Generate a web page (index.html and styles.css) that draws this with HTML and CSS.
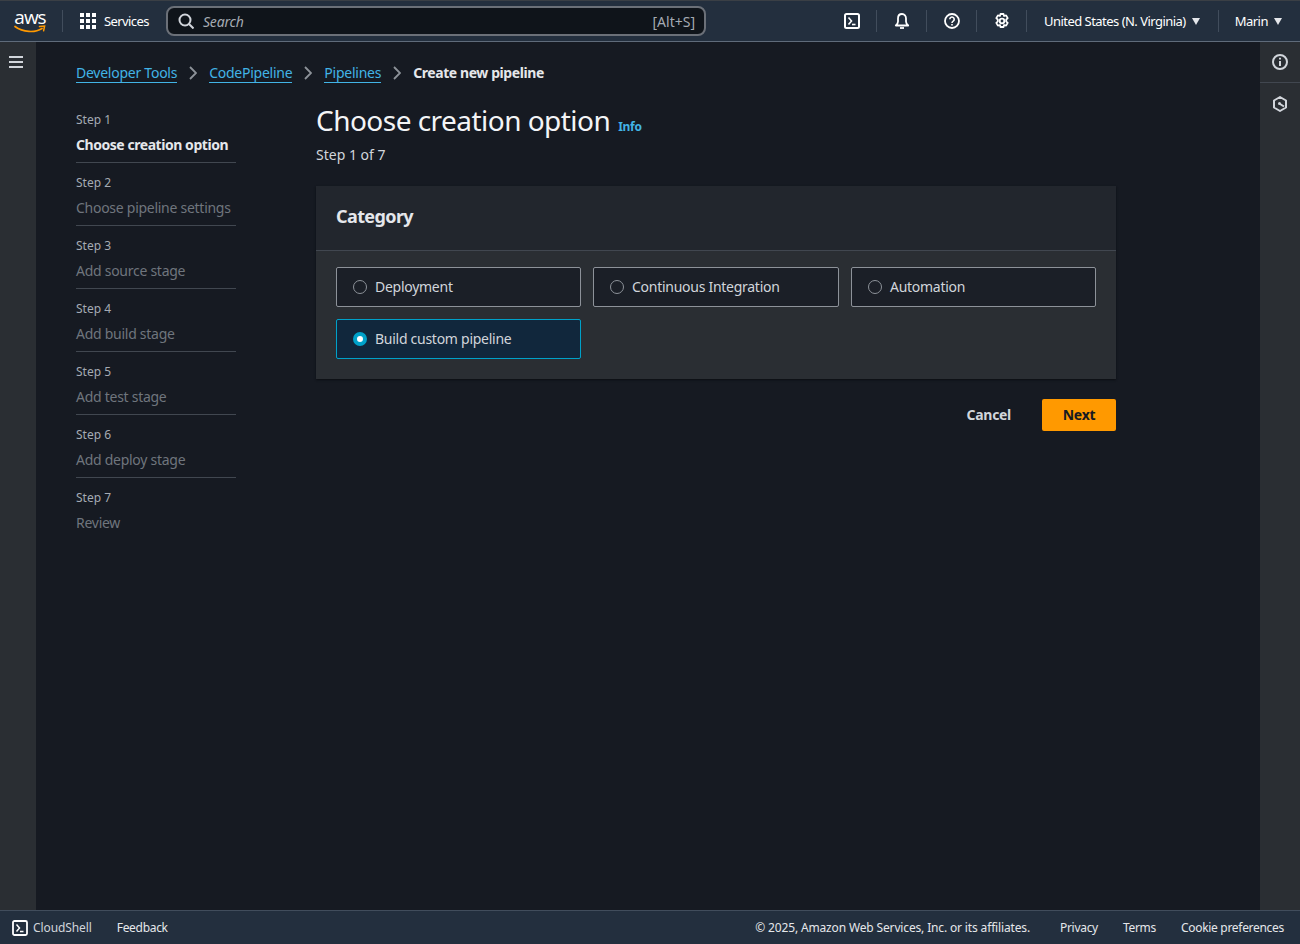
FILE: index.html
```html
<!DOCTYPE html>
<html lang="en">

<head>
    <meta charset="UTF-8">
    <title>Create new pipeline</title>
    <link rel="stylesheet" href="styles.css">
</head>

<body>
    <header class="topbar">
        <div class="logo">
            <span class="logo-text">aws</span>
            <svg class="logo-smile" width="32" height="9" viewBox="0 0 32 9">
                <path d="M1 1.5C9 7.5 21 8 28 3.5" fill="none" stroke="#f90" stroke-width="1.7" stroke-linecap="round" />
                <path d="M25.5 1.6L30.6 1L29.6 5.8" fill="none" stroke="#f90" stroke-width="1.5" stroke-linecap="round" />
            </svg>
        </div>
        <span class="bar-line logo-line"></span>
        <svg class="grid-icon" width="16" height="16" viewBox="0 0 16 16" fill="#fff">
            <rect x="0" y="0" width="4" height="4" />
            <rect x="6" y="0" width="4" height="4" />
            <rect x="12" y="0" width="4" height="4" />
            <rect x="0" y="6" width="4" height="4" />
            <rect x="6" y="6" width="4" height="4" />
            <rect x="12" y="6" width="4" height="4" />
            <rect x="0" y="12" width="4" height="4" />
            <rect x="6" y="12" width="4" height="4" />
            <rect x="12" y="12" width="4" height="4" />
        </svg>
        <span class="services">Services</span>
        <div class="search">
            <svg width="16" height="16" viewBox="0 0 16 16" fill="none" stroke="#d1d5db" stroke-width="2">
                <circle cx="7" cy="7" r="5.5" />
                <path d="M11 11l4.5 4.5" />
            </svg>
            <span class="search-text">Search</span>
            <span class="search-key">[Alt+S]</span>
        </div>
        <div class="tools">
            <span class="tool">
                <svg width="16" height="16" viewBox="0 0 16 16" fill="none" stroke="#fff" stroke-width="2">
                    <rect x="1" y="1" width="14" height="14" rx="1.5" />
                    <path d="M4.5 4.5L7.5 8L4.5 11.5" stroke-width="1.6" />
                    <path d="M8 11.5h3.5" stroke-width="1.6" />
                </svg>
            </span>
            <span class="bar-line"></span>
            <span class="tool">
                <svg width="16" height="16" viewBox="0 0 16 16" fill="none" stroke="#fff" stroke-width="1.8">
                    <path d="M8 1C5.500 1 4 3 4 5.500V8.500C4 10.300 3 11.500 1.800 12.500H14.200C13 11.500 12 10.300 12 8.500V5.500C12 3 10.500 1 8 1z" stroke-linejoin="round" />
                    <path d="M6 15h4" stroke-width="1.800" />
                </svg>
            </span>
            <span class="bar-line"></span>
            <span class="tool">
                <svg width="16" height="16" viewBox="0 0 16 16" fill="none" stroke="#fff" stroke-width="1.800">
                    <circle cx="8" cy="8" r="7" />
                    <path d="M5.800 6.200a2.200 2.200 0 1 1 3.400 1.900C8.400 8.600 8 9 8 10" stroke-width="1.600" />
                    <path d="M8 11v1.500" stroke-width="1.600" />
                </svg>
            </span>
            <span class="bar-line"></span>
            <span class="tool">
                <svg width="16" height="16" viewBox="0 0 16 16" fill="none" stroke="#fff" stroke-width="1.800">
                    <path d="M6.500 1h3l.6 2 2-.6 1.600 2.700-1.500 1.500v1.800l1.500 1.500-1.600 2.700-2-.6-.6 2h-3l-.6-2-2 .6-1.600-2.700 1.500-1.500V6.600L2.300 5.100l1.600-2.700 2 .6z" stroke-linejoin="round" />
                    <circle cx="8" cy="8" r="2.300" />
                </svg>
            </span>
            <span class="bar-line"></span>
            <span class="menu region">United States (N. Virginia)<i class="caret"></i></span>
            <span class="bar-line"></span>
            <span class="menu user">Marin<i class="caret"></i></span>
        </div>
    </header>

    <div class="shell">
        <aside class="rail left-rail">
            <svg width="14" height="12" viewBox="0 0 14 12" stroke="#d1d5db" stroke-width="2">
                <path d="M0 1h14M0 6h14M0 11h14" />
            </svg>
        </aside>

        <main class="page">
            <nav class="crumbs">
                <a class="crumb">Developer Tools</a>
                <svg class="chev" width="8" height="14" viewBox="0 0 8 14" fill="none" stroke="#8d9299" stroke-width="1.800">
                    <path d="M1 1l6 6-6 6" />
                </svg>
                <a class="crumb">CodePipeline</a>
                <svg class="chev" width="8" height="14" viewBox="0 0 8 14" fill="none" stroke="#8d9299" stroke-width="1.800">
                    <path d="M1 1l6 6-6 6" />
                </svg>
                <a class="crumb">Pipelines</a>
                <svg class="chev" width="8" height="14" viewBox="0 0 8 14" fill="none" stroke="#8d9299" stroke-width="1.800">
                    <path d="M1 1l6 6-6 6" />
                </svg>
                <b class="crumb-now">Create new pipeline</b>
            </nav>

            <div class="columns">
                <ol class="steps">
                    <li class="step current"><small>Step 1</small><span>Choose creation option</span></li>
                    <li class="step"><small>Step 2</small><span>Choose pipeline settings</span></li>
                    <li class="step"><small>Step 3</small><span>Add source stage</span></li>
                    <li class="step"><small>Step 4</small><span>Add build stage</span></li>
                    <li class="step"><small>Step 5</small><span>Add test stage</span></li>
                    <li class="step"><small>Step 6</small><span>Add deploy stage</span></li>
                    <li class="step last"><small>Step 7</small><span>Review</span></li>
                </ol>

                <section class="content">
                    <div class="title-row">
                        <h1>Choose creation option</h1>
                        <a class="info">Info</a>
                    </div>
                    <p class="sub">Step 1 of 7</p>

                    <div class="card">
                        <h2 class="card-head">Category</h2>
                        <div class="options">
                            <label class="option"><i class="radio"></i>Deployment</label>
                            <label class="option"><i class="radio"></i>Continuous Integration</label>
                            <label class="option"><i class="radio"></i>Automation</label>
                            <label class="option selected"><i class="radio"></i>Build custom pipeline</label>
                        </div>
                    </div>

                    <div class="actions">
                        <button class="btn-cancel">Cancel</button>
                        <button class="btn-next">Next</button>
                    </div>
                </section>
            </div>
        </main>

        <aside class="rail right-rail">
            <div class="rail-item">
                <svg width="16" height="16" viewBox="0 0 16 16" fill="none" stroke="#d1d5db" stroke-width="2">
                    <circle cx="8" cy="8" r="7" />
                    <path d="M8 7v5M8 3.800v1.700" />
                </svg>
            </div>
            <div class="rail-item">
                <svg width="16" height="16" viewBox="0 0 16 16" fill="none" stroke="#d1d5db" stroke-width="2">
                    <path d="M8 1l6 3.500v7L8 15l-6-3.500v-7z" stroke-linejoin="round" />
                    <circle cx="7.500" cy="7.500" r="1.500" fill="#d1d5db" stroke="none" />
                    <path d="M8 8l4 2.500" />
                </svg>
            </div>
        </aside>
    </div>

    <footer class="footer">
        <svg width="16" height="16" viewBox="0 0 16 16" fill="none" stroke="#fff" stroke-width="1.800">
            <rect x="1" y="1" width="14" height="14" rx="1.500" />
            <path d="M4.500 4.500L7.500 8L4.500 11.500M8 11.500h3.500" stroke-width="1.500" />
        </svg>
        <span class="foot-shell">CloudShell</span>
        <span class="foot-feedback">Feedback</span>
        <span class="foot-copy">© 2025, Amazon Web Services, Inc. or its affiliates.</span>
        <span class="foot-link">Privacy</span>
        <span class="foot-link">Terms</span>
        <span class="foot-link">Cookie preferences</span>
    </footer>
</body>

</html>
```

FILE: styles.css
```css
* {
    padding: 0;
    margin: 0;
    box-sizing: border-box;
}

html,
body {
    height: 100%;
}

body {
    display: flex;
    flex-direction: column;
    background-color: #161a22;
    color: #e5e7eb;
    font-family: "Noto Sans", "Open Sans", sans-serif;
    font-size: 14px;
    overflow: hidden;
}

.topbar {
    flex: none;
    height: 42px;
    display: flex;
    align-items: center;
    padding-left: 14px;
    background-color: #232f3e;
    border-top: 1px solid #3a3f45;
    border-bottom: 1px solid #5f6b7a;
    color: #fff;
    font-size: 13px;
}

.logo {
    width: 32px;
    height: 26px;
    position: relative;
}

.logo-text {
    display: block;
    font-family: "Open Sans", sans-serif;
    font-size: 19px;
    line-height: 19px;
    letter-spacing: -1px;
    text-align: center;
}

.logo-smile {
    position: absolute;
    left: 0;
    top: 17px;
}

.bar-line {
    width: 1px;
    height: 22px;
    background-color: #414d5c;
}

.logo-line {
    margin: 0 17px 0 16px;
}

.services {
    margin-left: 8px;
    width: 62px;
    letter-spacing: -0.6px;
}

.search {
    width: 540px;
    height: 30px;
    display: flex;
    align-items: center;
    padding: 0 9px 0 10px;
    background-color: #0f141a;
    border: 2px solid #6b7078;
    border-radius: 8px;
    color: #a5abb3;
}

.search-text {
    margin-left: 9px;
    font-style: italic;
    font-size: 14px;
    letter-spacing: -0.2px;
}

.search-key {
    margin-left: auto;
    font-size: 14px;
}

.tools {
    display: flex;
    align-items: center;
    margin-left: 121px;
}

.tool {
    width: 50px;
    display: flex;
    justify-content: center;
    margin: 0 -0.5px;
}

.tool svg {
    display: block;
}

.menu {
    display: flex;
    align-items: center;
    letter-spacing: -0.53px;
}

.region {
    padding: 0 18px 0 17px;
}

.user {
    padding-left: 16px;
}

.caret {
    width: 0;
    height: 0;
    margin-left: 6px;
    border-left: 4.5px solid transparent;
    border-right: 4.5px solid transparent;
    border-top: 7px solid #e5e7eb;
}

.shell {
    flex: 1;
    min-height: 0;
    display: flex;
}

.rail {
    flex: none;
    background-color: #2a2e33;
}

.left-rail {
    width: 36px;
    padding: 14px 0 0 9px;
}

.left-rail svg {
    display: block;
}

.right-rail {
    width: 40px;
}

.rail-item {
    height: 41px;
    display: flex;
    align-items: center;
    justify-content: center;
    border-bottom: 1px solid #414750;
}

.rail-item:last-child {
    border-bottom: none;
}

.page {
    flex: 1;
    padding: 20px 0 0 40px;
}

.crumbs {
    height: 22px;
    display: flex;
    align-items: center;
    color: #fff;
}

.crumb {
    color: #42b4e6;
    border-bottom: 1px solid #42b4e6;
    line-height: 18px;
    letter-spacing: -0.25px;
}

.chev {
    margin: 0 12px;
}

.crumb-now {
    font-weight: 700;
    color: #e5e7eb;
    letter-spacing: -0.42px;
    line-height: 18px;
    padding-bottom: 1px;
}

.columns {
    display: flex;
    padding-top: 16px;
}

.steps {
    width: 240px;
    list-style: none;
}

.step {
    width: 160px;
    height: 63px;
    padding-top: 12px;
    border-bottom: 1px solid #414750;
    margin-bottom: 0;
    color: #6f757d;
}

.step small {
    display: block;
    height: 23px;
    font-size: 12px;
    line-height: 16px;
    color: #a5abb3;
}

.step span {
    display: block;
    line-height: 20px;
    white-space: nowrap;
    letter-spacing: -0.27px;
}

.current span {
    font-weight: 700;
    color: #e5e7eb;
    letter-spacing: -0.45px;
}

.last {
    border-bottom: none;
}

.content {
    width: 800px;
}

.title-row {
    display: flex;
    align-items: baseline;
    margin-top: 2px;
}

h1 {
    font-size: 28px;
    line-height: 36px;
    font-weight: 400;
    color: #f3f4f6;
    letter-spacing: -0.53px;
}

.info {
    margin-left: 8px;
    font-size: 12px;
    font-weight: 700;
    color: #42b4e6;
    letter-spacing: -0.3px;
}

.sub {
    margin-top: 7px;
    line-height: 20px;
    color: #d1d5db;
}

.card {
    margin-top: 21px;
    background-color: #2a2e33;
    box-shadow: 0 1px 2px #0b0e13;
}

.card-head {
    height: 65px;
    padding: 18px 20px 0;
    background-color: #22262d;
    border-bottom: 1px solid #414750;
    font-size: 18px;
    line-height: 24px;
    font-weight: 700;
    color: #e5e7eb;
    letter-spacing: -0.6px;
}

.options {
    display: grid;
    grid-template-columns: 245px 246px 245px;
    gap: 12px;
    padding: 16px 20px 20px;
}

.option {
    height: 40px;
    display: flex;
    align-items: center;
    padding-left: 16px;
    padding-bottom: 2px;
    background-color: #1b1f27;
    border: 1px solid #8d9299;
    border-radius: 2px;
    color: #d1d5db;
    letter-spacing: -0.27px;
}

.radio {
    flex: none;
    width: 14px;
    height: 14px;
    margin-top: 2px;
    margin-right: 8px;
    border: 1.5px solid #8d9299;
    border-radius: 50%;
}

.selected {
    background-color: #11273c;
    border-color: #00a1c9;
}

.selected .radio {
    background-color: #fff;
    border: 4px solid #00a1c9;
}

.actions {
    display: flex;
    justify-content: flex-end;
    align-items: center;
    margin-top: 20px;
}

button {
    border: none;
    background: none;
    font-family: inherit;
    font-size: 14px;
    font-weight: 700;
    height: 32px;
    padding-bottom: 2px;
    letter-spacing: -0.3px;
}

.btn-cancel {
    color: #d1d5db;
    margin-right: 31px;
}

.btn-next {
    width: 74px;
    background-color: #f90;
    color: #161a22;
    border-radius: 2px;
}

.footer {
    flex: none;
    height: 34px;
    display: flex;
    align-items: center;
    padding: 0 16px 0 12px;
    background-color: #232f3e;
    border-top: 1px solid #414d5c;
    color: #e5e7eb;
    font-size: 12px;
    letter-spacing: -0.1px;
}

.foot-shell {
    margin-left: 5px;
    color: #d1d5db;
}

.foot-feedback {
    margin-left: 25px;
    letter-spacing: -0.3px;
}

.foot-copy {
    margin-left: auto;
    letter-spacing: -0.15px;
}

.foot-link {
    margin-left: 25px;
    letter-spacing: -0.3px;
}

.foot-copy+.foot-link {
    margin-left: 30px;
}
```
